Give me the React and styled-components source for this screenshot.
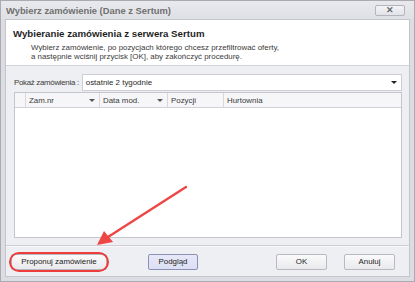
import React from "react";
import styled, { createGlobalStyle } from "styled-components";

const Global = createGlobalStyle`
  html, body { margin: 0; padding: 0; background: #fff; }
  body { font-family: "Liberation Sans", Arial, sans-serif; }
`;

const Window = styled.div`
  position: relative;
  width: 415px;
  height: 282px;
  box-sizing: border-box;
  background: #dcdde3;
  border: 1px solid #a9aab2;
  display: flex;
  flex-direction: column;
  overflow: hidden;
`;

const TitleBar = styled.div`
  height: 18px;
  flex: none;
  display: flex;
  align-items: center;
  justify-content: space-between;
  padding: 0 9px 0 5px;
  background: linear-gradient(#e9e9ed, #dfe0e5);
  color: #707070;
  font-weight: bold;
  font-size: 9.4px;
`;

const CloseBtn = styled.div`
  width: 30px;
  height: 11px;
  box-sizing: border-box;
  border: 1px solid #b3b4bc;
  border-radius: 2px;
  background: linear-gradient(#f4f4f6, #e2e3e8);
  display: flex;
  align-items: center;
  justify-content: center;
  color: #6a6a70;
  font-size: 9px;
  line-height: 1;
`;

const Client = styled.div`
  flex: 1;
  margin: 0 4px 4px 4px;
  border: 1px solid #c3c4cc;
  display: flex;
  flex-direction: column;
  background: #eeeff3;
`;

const Header = styled.div`
  background: #fff;
  height: 46px;
  box-sizing: border-box;
  padding: 8px 7px 0 7px;
  border-bottom: 1px solid #d3d4da;
`;

const HeadTitle = styled.div`
  font-weight: bold;
  font-size: 9.7px;
  color: #1f1f1f;
  margin-bottom: 4px;
`;

const HeadText = styled.div`
  font-size: 7.9px;
  line-height: 9px;
  color: #3a3a3a;
  padding-left: 18px;
`;

const MainArea = styled.div`
  flex: 1;
  display: flex;
  flex-direction: column;
  padding: 8px 7px 7px 7px;
  gap: 1px;
  border-bottom: 1px solid #cfd0d6;
`;

const FilterRow = styled.div`
  display: flex;
  align-items: center;
  gap: 3px;
  font-size: 7.9px;
  color: #3a3a3a;
  padding-left: 1px;
`;

const Label = styled.span`
  letter-spacing: -0.3px;
`;

const Combo = styled.div`
  flex: 1;
  height: 17px;
  box-sizing: border-box;
  background: #fff;
  border: 1px solid #cdced6;
  display: flex;
  align-items: center;
  justify-content: space-between;
  padding: 0 4px 0 3px;
  color: #2a2a2a;
`;

const Arrow = styled.span`
  width: 0;
  height: 0;
  border-left: 3px solid transparent;
  border-right: 3px solid transparent;
  border-top: 3px solid ${(p) => p.$color || "#222"};
`;

const Grid = styled.div`
  flex: 1;
  margin-left: 1px;
  background: #fff;
  border: 1px solid #c4c5cc;
  display: flex;
  flex-direction: column;
`;

const GridHead = styled.div`
  display: grid;
  grid-template-columns: 11px 74px 68px 56px 1fr;
  height: 14px;
  border-bottom: 1px solid #d2d3d9;
  background: #f6f6f8;
`;

const HeadCell = styled.div`
  display: flex;
  align-items: center;
  justify-content: space-between;
  padding: 0 4px 0 3px;
  border-right: 1px solid #d8d9de;
  font-size: 7.9px;
  color: #3a3a3a;
  &:last-child { border-right: none; }
`;

const Footer = styled.div`
  height: 29px;
  flex: none;
  display: flex;
  align-items: center;
  padding: 0 11px 0 5px;
  border-top: 1px solid #f8f8fa;
`;

const Button = styled.div`
  width: ${(p) => p.$w}px;
  height: 16px;
  box-sizing: border-box;
  margin-left: ${(p) => p.$ml || 0}px;
  border: 1px solid ${(p) => (p.$focus ? "#8d90b5" : "#b8b9c2")};
  border-radius: 2px;
  background: ${(p) => (p.$focus ? "linear-gradient(#e6e8f8, #dde0f4)" : "linear-gradient(#fafafb, #eaeaee)")};
  display: flex;
  align-items: center;
  justify-content: center;
  font-size: 7.9px;
  color: #222;
  position: relative;
`;

const Ring = styled.div`
  position: absolute;
  left: -3px;
  top: -3px;
  right: -3px;
  bottom: -3px;
  border: 2px solid #ee3b3b;
  border-radius: 11px;
  pointer-events: none;
`;

const Overlay = styled.svg`
  position: absolute;
  left: 0;
  top: 0;
  pointer-events: none;
`;

export default function App() {
  return (
    <>
      <Global />
      <Window>
        <TitleBar>
          <span>Wybierz zamówienie (Dane z Sertum)</span>
          <CloseBtn>✕</CloseBtn>
        </TitleBar>
        <Client>
          <Header>
            <HeadTitle>Wybieranie zamówienia z serwera Sertum</HeadTitle>
            <HeadText>Wybierz zamówienie, po pozycjach którego chcesz przefiltrować oferty,</HeadText>
            <HeadText>a następnie wciśnij przycisk [OK], aby zakończyć procedurę.</HeadText>
          </Header>
          <MainArea>
            <FilterRow>
              <Label>Pokaż zamówienia :</Label>
              <Combo>
                <span>ostatnie 2 tygodnie</span>
                <Arrow />
              </Combo>
            </FilterRow>
            <Grid>
              <GridHead>
                <HeadCell />
                <HeadCell>
                  <span>Zam.nr</span>
                  <Arrow $color="#555" />
                </HeadCell>
                <HeadCell>
                  <span>Data mod.</span>
                  <Arrow $color="#555" />
                </HeadCell>
                <HeadCell>Pozycji</HeadCell>
                <HeadCell>Hurtownia</HeadCell>
              </GridHead>
            </Grid>
          </MainArea>
          <Footer>
            <Button $w={96}>
              Proponuj zamówienie
              <Ring />
            </Button>
            <Button $w={50} $ml={41} $focus>Podgląd</Button>
            <Button $w={51} $ml={78}>OK</Button>
            <Button $w={51} $ml={17}>Anuluj</Button>
          </Footer>
        </Client>
        <Overlay width="415" height="282" viewBox="0 0 415 282">
          <line x1="185" y1="186" x2="107" y2="236" stroke="#f04545" strokeWidth="2.4" strokeLinecap="round" />
          <polygon points="96,244 103,230 112,241" fill="#f04545" />
        </Overlay>
      </Window>
    </>
  );
}
